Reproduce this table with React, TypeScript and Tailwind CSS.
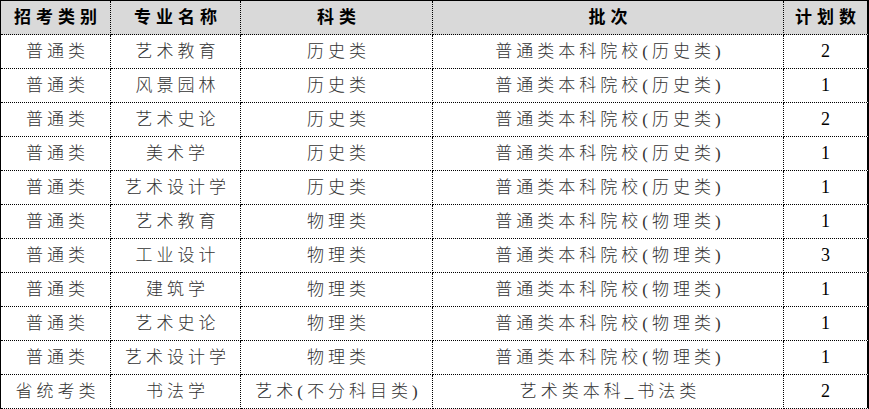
const rows: [string, string, string, string, string][] = [
  ["普通类", "艺术教育", "历史类", "普通类本科院校(历史类)", "2"],
  ["普通类", "风景园林", "历史类", "普通类本科院校(历史类)", "1"],
  ["普通类", "艺术史论", "历史类", "普通类本科院校(历史类)", "2"],
  ["普通类", "美术学", "历史类", "普通类本科院校(历史类)", "1"],
  ["普通类", "艺术设计学", "历史类", "普通类本科院校(历史类)", "1"],
  ["普通类", "艺术教育", "物理类", "普通类本科院校(物理类)", "1"],
  ["普通类", "工业设计", "物理类", "普通类本科院校(物理类)", "3"],
  ["普通类", "建筑学", "物理类", "普通类本科院校(物理类)", "1"],
  ["普通类", "艺术史论", "物理类", "普通类本科院校(物理类)", "1"],
  ["普通类", "艺术设计学", "物理类", "普通类本科院校(物理类)", "1"],
  ["省统考类", "书法学", "艺术(不分科目类)", "艺术类本科_书法类", "2"],
];

const headers = ["招考类别", "专业名称", "科类", "批次", "计划数"];

const font = { fontFamily: '"Liberation Serif", "Noto Sans CJK SC", serif' };

export default function App() {
  return (
    <div className="w-[869px] h-[409px] bg-white overflow-hidden" style={font}>
      <div className="grid grid-cols-[110px_130px_192px_351px_85px] border-l border-t border-black">
        {headers.map((h, i) => (
          <div
            key={h}
            className={`h-[34px] flex items-center justify-center bg-[#d9d9d9] border-b border-dotted border-black text-[17px] font-bold tracking-[5px] text-black ${
              i === 4 ? "border-r-2 border-r-solid" : "border-r"
            }`}
            style={i === 4 ? { borderRightStyle: "solid" } : undefined}
          >
            <span className="mr-[-5px]">{h}</span>
          </div>
        ))}
        {rows.map((r, ri) =>
          r.map((c, ci) => (
            <div
              key={`${ri}-${ci}`}
              className={`h-[34px] flex items-center justify-center border-b border-dotted border-black ${
                ci === 4
                  ? "border-r-2 text-[18px] text-black"
                  : "border-r text-[17px] font-light tracking-[4px] text-[#333]"
              }`}
              style={ci === 4 ? { borderRightStyle: "solid" } : undefined}
            >
              <span className={ci === 4 ? "" : "mr-[-4px]"}>{c}</span>
            </div>
          ))
        )}
      </div>
    </div>
  );
}
